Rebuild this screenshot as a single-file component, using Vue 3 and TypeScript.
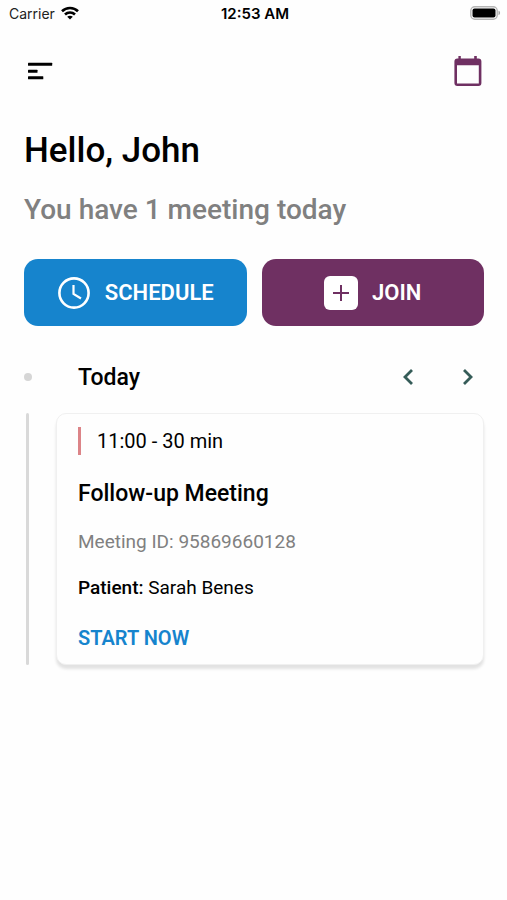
<script setup lang="ts">
import { ref } from 'vue'

interface Meeting {
  time: string
  title: string
  id: string
  patient: string
}

const userName = ref('John')
const meetings = ref<Meeting[]>([
  { time: '11:00 - 30 min', title: 'Follow-up Meeting', id: '95869660128', patient: 'Sarah Benes' },
])
</script>

<template>
  <div class="screen">
    <div class="status">
      <div class="carrier">
        <span>Carrier</span>
        <svg width="18" height="14" viewBox="0 0 18 14" fill="none" stroke="#000" stroke-width="2.6">
          <path d="M1 5.2C5.4 0.9 12.6 0.9 17 5.2" />
          <path d="M4 8.5C6.8 5.8 11.2 5.8 14 8.5" />
          <path d="M9 13.6L6.2 10.8C7.8 9.4 10.2 9.4 11.8 10.8Z" fill="#000" stroke="none" />
        </svg>
      </div>
      <span class="clock">12:53 AM</span>
      <svg class="battery" width="31" height="14" viewBox="0 0 31 14">
        <rect x="0.8" y="0.8" width="26.4" height="12.4" rx="4" fill="#fff" stroke="#b5b5b5" stroke-width="1.4" />
        <rect x="2.5" y="2.5" width="23" height="9" rx="2" fill="#000" />
        <path d="M28.5 4.8C30.6 5.4 30.6 8.6 28.5 9.2Z" fill="#a6a6a6" />
      </svg>
    </div>

    <header class="topbar">
      <button class="icon-button" type="button" aria-label="Menu">
        <svg width="32" height="32" viewBox="0 0 32 32" fill="#000">
          <rect x="4" y="7.8" width="24.2" height="3" rx="0.5" />
          <rect x="4" y="14.7" width="9.5" height="3" rx="0.5" />
          <rect x="4" y="21.3" width="15.3" height="3" rx="0.5" />
        </svg>
      </button>
      <button class="icon-button" type="button" aria-label="Calendar">
        <svg width="32" height="32" viewBox="0 0 32 32" fill="#6f3062">
          <path
            fill-rule="evenodd"
            d="M6.4 1H8.8V3.5H22.2V1H24.8V3.5H26.4A3 3 0 0 1 29.4 6.5V28A3 3 0 0 1 26.4 31H5.4A3 3 0 0 1 2.4 28V6.5A3 3 0 0 1 5.4 3.5H6.4ZM5 10.2V28.4H26.8V10.2Z"
          />
        </svg>
      </button>
    </header>

    <main class="content">
      <h1 class="greeting">Hello, {{ userName }}</h1>
      <p class="summary">You have {{ meetings.length }} meeting today</p>

      <div class="actions">
        <button class="action schedule" type="button">
          <svg width="34" height="34" viewBox="0 0 34 34" fill="none" stroke="#fff">
            <circle cx="17" cy="17" r="14.6" stroke-width="2.6" />
            <path d="M16.5 9V18L24 22.5" stroke-width="2.2" />
          </svg>
          <span>SCHEDULE</span>
        </button>
        <button class="action join" type="button">
          <svg width="34" height="34" viewBox="0 0 34 34">
            <rect width="34" height="34" rx="6" fill="#fff" />
            <path d="M9 17H25M17 9V25" fill="none" stroke="#6f3062" stroke-width="2" />
          </svg>
          <span>JOIN</span>
        </button>
      </div>

      <section class="timeline">
        <div class="day">
          <span class="dot"></span>
          <h2 class="day-title">Today</h2>
          <div class="pager">
            <button class="page" type="button" aria-label="Previous day">
              <svg width="20" height="20" viewBox="0 0 20 20" fill="none" stroke="#355c58" stroke-width="2.8">
                <path d="M14 3L7 10L14 17" />
              </svg>
            </button>
            <button class="page" type="button" aria-label="Next day">
              <svg width="20" height="20" viewBox="0 0 20 20" fill="none" stroke="#355c58" stroke-width="2.8">
                <path d="M6 3L13 10L6 17" />
              </svg>
            </button>
          </div>
        </div>

        <div v-for="meeting in meetings" :key="meeting.id" class="entry">
          <span class="rail"></span>
          <article class="card">
            <p class="time">{{ meeting.time }}</p>
            <h3 class="title">{{ meeting.title }}</h3>
            <p class="meeting-id">Meeting ID: {{ meeting.id }}</p>
            <p class="patient"><strong>Patient:</strong> {{ meeting.patient }}</p>
            <button class="start" type="button">START NOW</button>
          </article>
        </div>
      </section>
    </main>
  </div>
</template>

<style>
body {
  background: #fefefe;
}
</style>

<style scoped>
.screen {
  min-height: 100vh;
  font-family: Roboto, 'Liberation Sans', sans-serif;
  color: #000;
}
h1,
h2,
h3,
p {
  margin: 0;
}
svg {
  display: block;
}
button {
  padding: 0;
  border: 0;
  background: none;
  font: inherit;
  cursor: pointer;
}
.status {
  display: grid;
  grid-template-columns: 1fr auto 1fr;
  align-items: center;
  height: 26px;
  padding: 0 6px 0 9px;
  font: 14px Inter, sans-serif;
}
.carrier {
  display: flex;
  align-items: center;
  gap: 6px;
  color: #222;
}
.clock {
  font-size: 15px;
  font-weight: 600;
}
.battery {
  justify-self: end;
}
.topbar {
  display: flex;
  justify-content: space-between;
  padding: 29px 23px 0 24px;
}
.content {
  padding: 41px 23px 24px 24px;
}
.greeting {
  font-size: 35px;
  font-weight: 500;
  line-height: 46px;
}
.summary {
  margin-top: 15px;
  font-size: 28px;
  font-weight: 500;
  line-height: 42px;
  color: #808080;
}
.actions {
  display: grid;
  grid-template-columns: 1fr 1fr;
  gap: 15px;
  margin-top: 28px;
}
.action {
  display: flex;
  align-items: center;
  justify-content: center;
  gap: 14px;
  height: 67px;
  border-radius: 14px;
  color: #fff;
  font-size: 22px;
  font-weight: 600;
}
.schedule {
  background: #1684cd;
}
.join {
  background: #6f3062;
}
.timeline {
  margin-top: 31px;
}
.day {
  display: grid;
  grid-template-columns: 54px 1fr auto;
  align-items: center;
  height: 40px;
}
.dot {
  width: 8px;
  height: 8px;
  border-radius: 50%;
  background: #d6d6d6;
}
.day-title {
  font-size: 23px;
  font-weight: 500;
}
.pager {
  display: flex;
  gap: 40px;
  padding-right: 6px;
}
.entry {
  display: grid;
  grid-template-columns: 3px 1fr;
  gap: 27px;
  margin-top: 16px;
  padding-left: 2px;
}
.rail {
  border-radius: 2px;
  background: #d9d9d9;
}
.card {
  display: flex;
  flex-direction: column;
  align-items: flex-start;
  padding: 13px 21px 14px;
  border: 1px solid #f0f0f0;
  border-radius: 10px;
  background: #fefefe;
  box-shadow: 0 4px 3px #e2e2e2;
}
.time {
  padding-left: 16px;
  border-left: 3px solid #dc8488;
  font-size: 20px;
  line-height: 28px;
}
.title {
  margin-top: 24px;
  font-size: 23px;
  font-weight: 500;
  line-height: 30px;
}
.meeting-id {
  margin-top: 21px;
  font-size: 19px;
  line-height: 24px;
  color: #808080;
}
.patient {
  margin-top: 22px;
  font-size: 19px;
  line-height: 24px;
}
.patient strong {
  font-weight: 500;
}
.start {
  margin-top: 26px;
  color: #1684cd;
  font-size: 20px;
  font-weight: 600;
  line-height: 24px;
}
</style>
